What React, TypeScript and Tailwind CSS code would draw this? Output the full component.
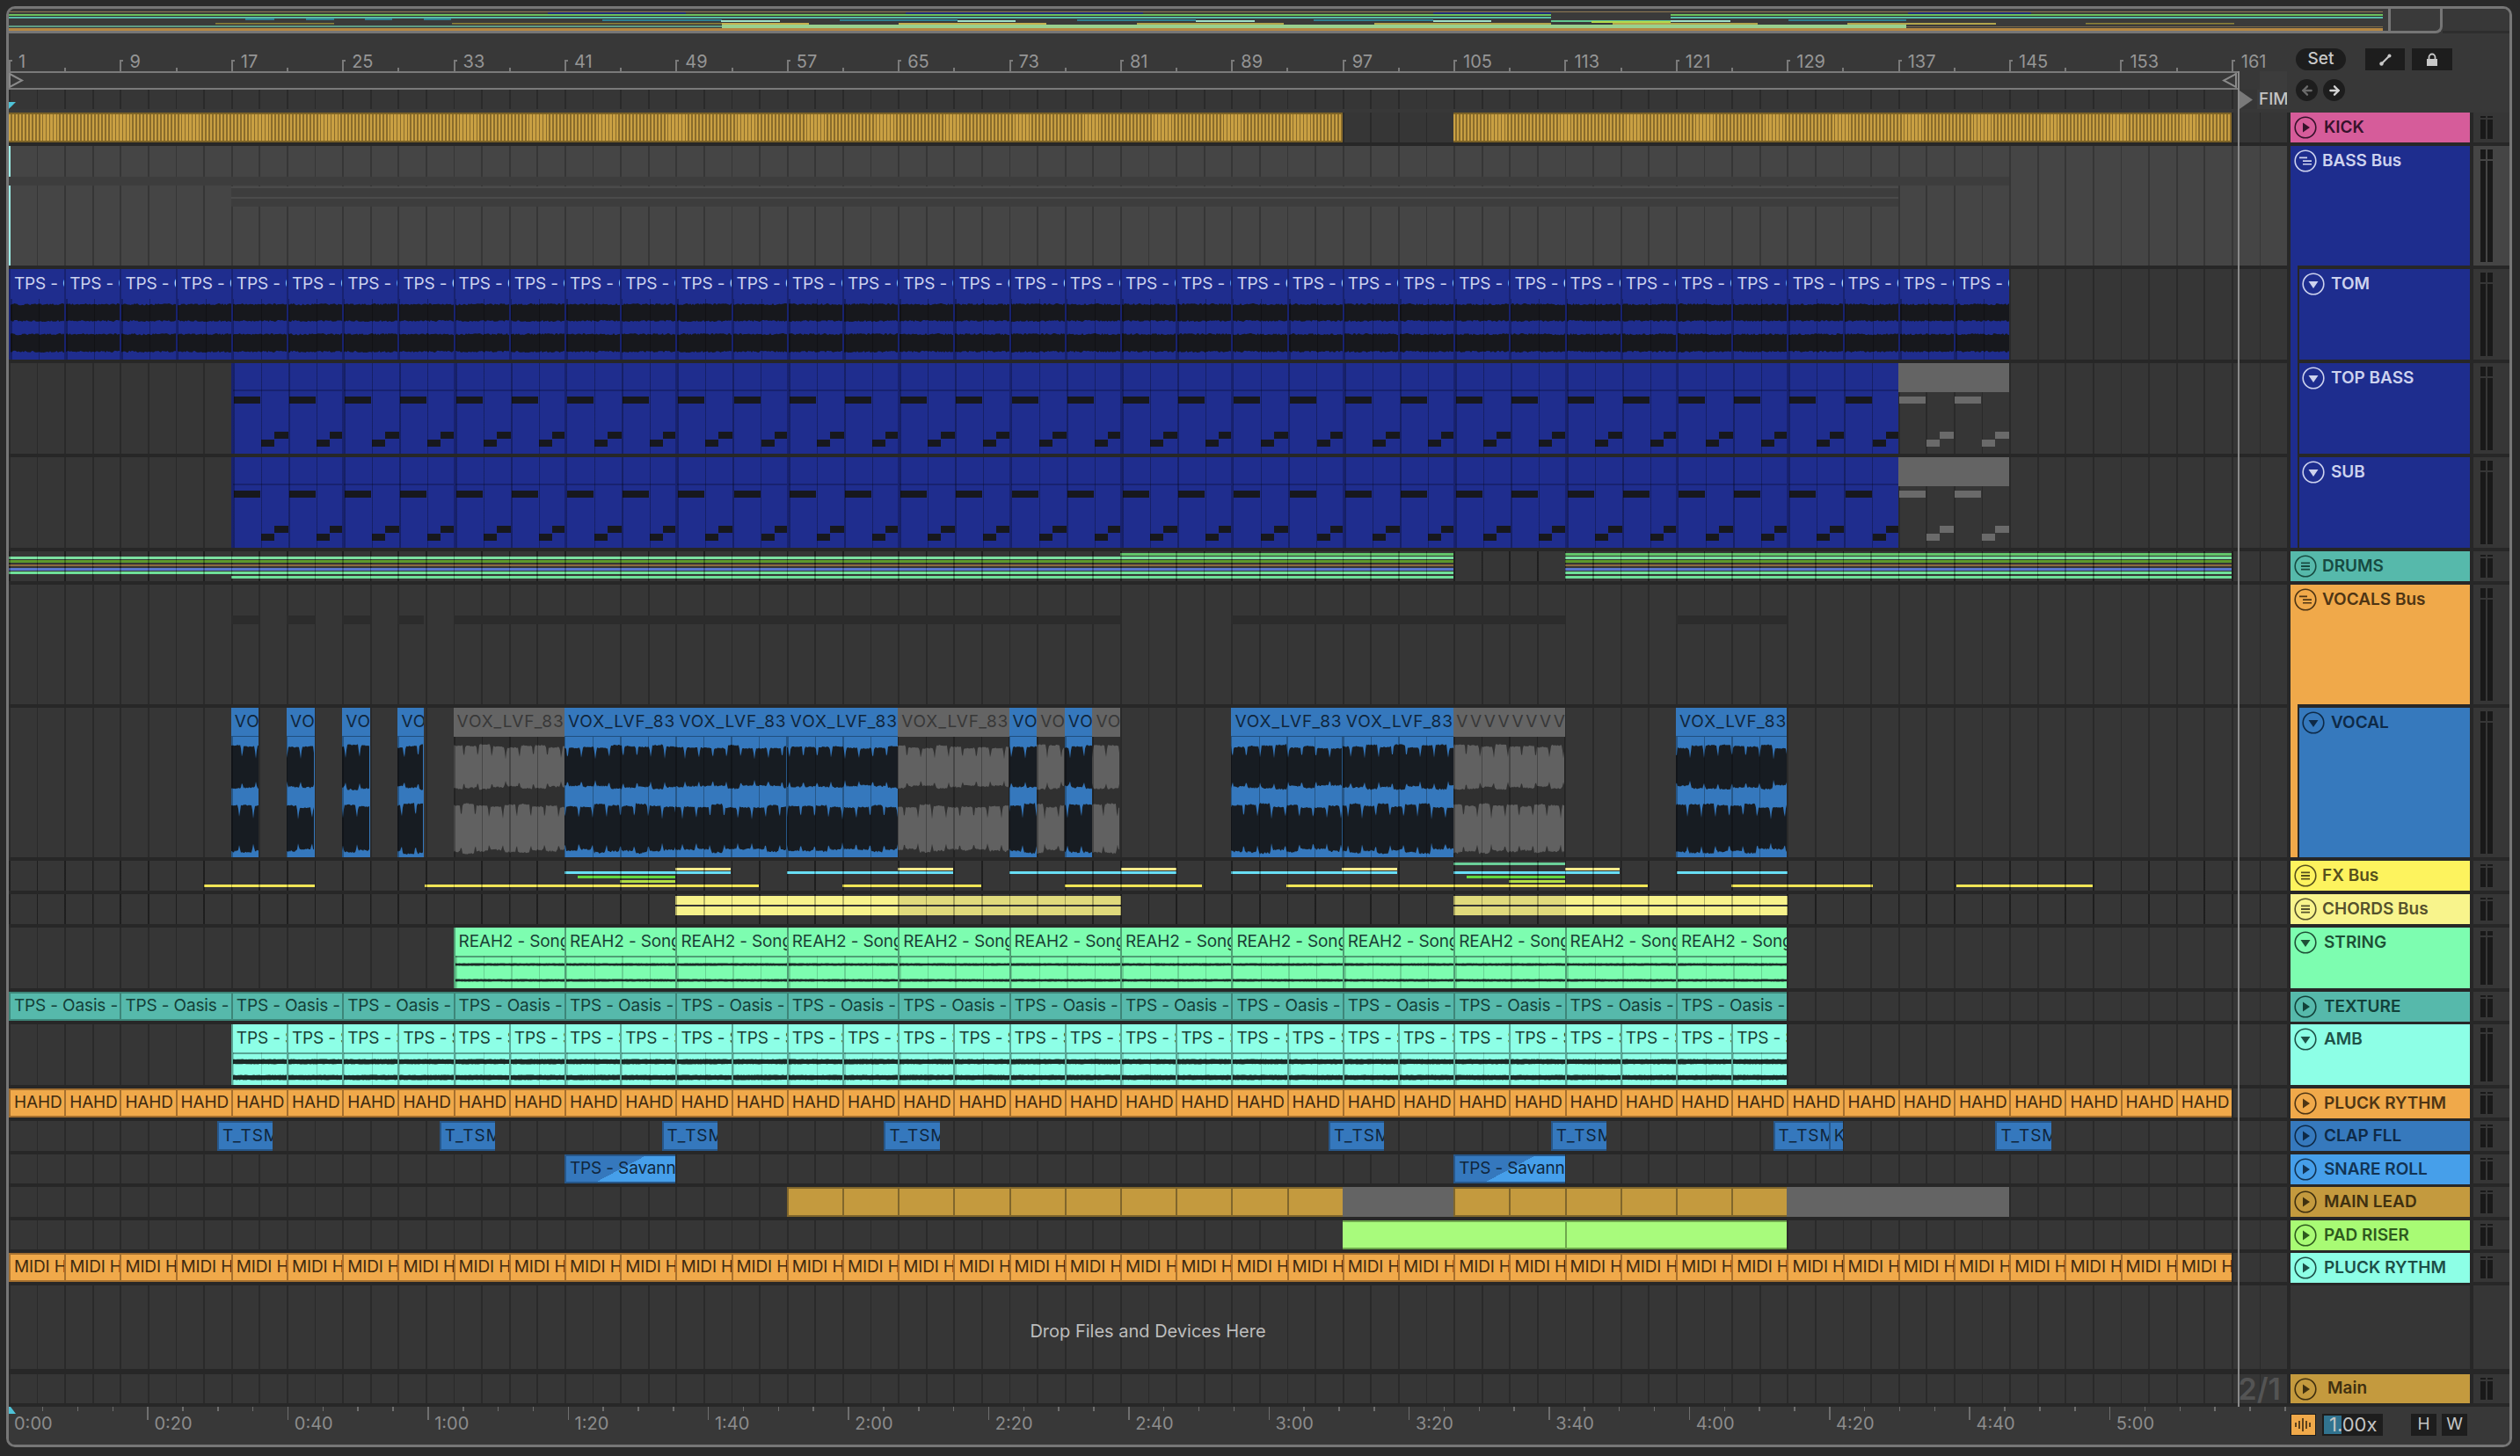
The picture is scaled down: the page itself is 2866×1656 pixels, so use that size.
import React from "react";
import { ArrowLeft, ArrowRight } from "lucide-react";

const BAR = 15.8;
const bx = (bar: number) => (bar - 1) * BAR;
const seq = (from: number, to: number, step: number) => {
  const out: number[] = [];
  for (let b = from; b < to; b += step) out.push(b);
  return out;
};
const rnd = (i: number) => {
  const v = Math.sin(i * 12.9898) * 43758.5453;
  return v - Math.floor(v);
};

const gridLane =
  "bg-[repeating-linear-gradient(90deg,#2a2a2a_0,#2a2a2a_1.8px,transparent_1.8px,transparent_31.6px)]";
const gridLaneLight =
  "bg-[repeating-linear-gradient(90deg,#363636_0,#363636_1.8px,transparent_1.8px,transparent_31.6px)]";
const gridClip =
  "bg-[repeating-linear-gradient(90deg,rgba(0,0,0,0.28)_0,rgba(0,0,0,0.28)_1.5px,transparent_1.5px,transparent_31.6px)]";

// flat-ish band, for the sustained samples
function band(w: number, seed: number, cy: number, up: number, down: number) {
  const top: string[] = [];
  const bottom: string[] = [];
  for (let x = 0; x <= w; x += 1.5) {
    top.push(`${x} ${(cy - up * (1 - rnd(x + seed) * 0.2)).toFixed(1)}`);
    bottom.unshift(`${x} ${(cy + down * (1 - rnd(x * 2 + seed) * 0.2)).toFixed(1)}`);
  }
  return `M${top.join("L")}L${bottom.join("L")}Z`;
}

// vocal envelope: broad lobes with narrow cuts between them
function lobes(w: number, seed: number, cy: number, up: number, down: number) {
  const top: string[] = [];
  const bottom: string[] = [];
  const period = 15.8;
  for (let x = 0; x <= w; x += 1) {
    const phase = ((x + seed * 3) / period) * Math.PI;
    const s = Math.min(1, Math.abs(Math.sin(phase)) * 3.2);
    const lobe = Math.floor((x + seed * 3) / period);
    const gain = 0.82 + 0.18 * rnd(lobe + seed);
    const a = up * gain * (0.4 + 0.6 * s) * (1 - rnd(x + seed) * 0.06);
    const b = down * gain * (0.72 + 0.28 * s) * (1 - rnd(x * 3 + seed) * 0.08);
    top.push(`${x} ${(cy - a).toFixed(1)}`);
    bottom.unshift(`${x} ${(cy + b).toFixed(1)}`);
  }
  return `M${top.join("L")}L${bottom.join("L")}Z`;
}

function VoxWave({ w, seed, color }: { w: number; seed: number; color: string }) {
  return (
    <svg className="absolute left-0 bottom-0" width={w} height={137} fill={color}>
      <path d={lobes(w, seed, 34, 26, 27)} />
      <path d={lobes(w, seed + 1, 103, 28, 31)} />
    </svg>
  );
}

function TomWave({ w, seed }: { w: number; seed: number }) {
  return (
    <svg className="absolute left-0 bottom-0" width={w} height={69} fill="#17181d">
      <path d={band(w, seed, 16, 11, 10)} />
      <path d={band(w, seed + 3, 50, 11, 11)} />
    </svg>
  );
}

function Clip({ from, to, className, children }: { from: number; to: number; className?: string; children?: React.ReactNode }) {
  return (
    <div
      className={`absolute top-0 bottom-0 overflow-hidden ${className ?? ""}`}
      style={{ left: bx(from), width: (to - from) * BAR }}
    >
      {children}
    </div>
  );
}

function Seg({ from, to, top, h, className }: { from: number; to: number; top: number; h: number; className: string }) {
  return <div className={`absolute ${className}`} style={{ left: bx(from), width: (to - from) * BAR, top, height: h }} />;
}

// x in screen pixels, for the strips read straight off the picture
function Line({ x0, x1, top, h, className }: { x0: number; x1: number; top: number; h: number; className: string }) {
  return <div className={`absolute ${className}`} style={{ left: x0 - 10, width: x1 - x0, top, height: h }} />;
}

function Title({ text, h = "h-[34px]", wide }: { text: string; h?: string; wide?: boolean }) {
  return (
    <div className={`${h} flex items-center pl-[4px] whitespace-nowrap text-[19px] ${wide ? "tracking-[0.9px]" : "tracking-[-0.15px]"}`}>
      {text}
    </div>
  );
}

function TextClips({ from, to, step, text, className }: { from: number; to: number; step: number; text: string; className: string }) {
  return (
    <>
      {seq(from, to, step).map((b) => (
        <Clip key={b} from={b} to={b + step} className={className}>
          <Title text={text} h="h-full" />
        </Clip>
      ))}
    </>
  );
}

function BassNotes({ from, to, note, gridded }: { from: number; to: number; note: string; gridded?: boolean }) {
  return (
    <>
      {seq(from, to, 4).map((b) => {
        const l = bx(b) - bx(from);
        return (
          <React.Fragment key={b}>
            <div className={`absolute h-[8px] top-[38px] ${note}`} style={{ left: l + 1, width: 30 }} />
            <div className={`absolute h-[8px] top-[87px] ${note}`} style={{ left: l + 32, width: 15 }} />
            <div className={`absolute h-[8px] top-[78px] ${note}`} style={{ left: l + 47, width: 16 }} />
          </React.Fragment>
        );
      })}
      {gridded && <div className={`absolute inset-0 ${gridClip}`} />}
    </>
  );
}

function BassLane() {
  return (
    <>
      {seq(17, 137, 8).map((b) => (
        <Clip key={b} from={b} to={b + 8} className="bg-[#1f2d8e] border-l-2 border-[#182270]">
          <div className="h-[32px] border-b-2 border-[#182270]" />
          <BassNotes from={b} to={b + 8} note="bg-[#17181d]" gridded />
        </Clip>
      ))}
      <Clip from={137} to={145}>
        <div className="h-[33px] bg-[#646464]" />
        <BassNotes from={137} to={145} note="bg-[#6a6a6a]" />
      </Clip>
    </>
  );
}

type VoxDef = { from: number; to: number; gray?: boolean; label: string };
const voxClips: VoxDef[] = [
  { from: 17, to: 19, label: "VO" },
  { from: 21, to: 23, label: "VO" },
  { from: 25, to: 27, label: "VO" },
  { from: 29, to: 30.85, label: "VO" },
  { from: 33, to: 41, gray: true, label: "VOX_LVF_83" },
  { from: 41, to: 49, label: "VOX_LVF_83" },
  { from: 49, to: 57, label: "VOX_LVF_83" },
  { from: 57, to: 65, label: "VOX_LVF_83" },
  { from: 65, to: 73, gray: true, label: "VOX_LVF_83" },
  { from: 73, to: 75, label: "VO" },
  { from: 75, to: 77, gray: true, label: "VO" },
  { from: 77, to: 79, label: "VO" },
  { from: 79, to: 81, gray: true, label: "VO" },
  { from: 89, to: 97, label: "VOX_LVF_83" },
  { from: 97, to: 105, label: "VOX_LVF_83" },
  { from: 121, to: 129, label: "VOX_LVF_83" },
];

function VocalLane() {
  return (
    <>
      {voxClips.map((c) => {
        const w = (c.to - c.from) * BAR;
        return (
          <Clip key={c.from} from={c.from} to={c.to} className={c.gray ? "bg-[#303030]" : "bg-[#3578bd]"}>
            <div className={`h-[33px] ${c.gray ? "bg-[#646464] text-[#383838]" : "text-[#10263c] border-b border-[#1f4f80]"}`}>
              <Title text={c.label} h="h-[33px]" wide />
            </div>
            <VoxWave w={w} seed={c.from} color={c.gray ? "#616161" : "#171c22"} />
            <div className={`absolute left-0 right-0 top-[33px] bottom-0 ${gridClip}`} />
          </Clip>
        );
      })}
      <Clip from={105} to={113} className="bg-[#303030]">
        <div className="h-[33px] bg-[#646464] text-[#383838] flex text-[19px] items-center overflow-hidden">
          {seq(0, 8, 1).map((i) => (
            <span key={i} className="w-[15.8px] shrink-0 pl-[3px]">V</span>
          ))}
        </div>
        <VoxWave w={126} seed={11} color="#616161" />
        <div className={`absolute left-0 right-0 top-[33px] bottom-0 ${gridClip}`} />
      </Clip>
    </>
  );
}

function SampleClips({ from, to, step, text, color, line, barH, top, gap }: { from: number; to: number; step: number; text: string; color: string; line: string; barH: number; top: number; gap: number }) {
  const w = step * BAR;
  return (
    <>
      {seq(from, to, step).map((b) => (
        <Clip key={b} from={b} to={b + step} className={`${color} ${line} border-l-2 text-[#1a3f36]`}>
          <Title text={text} h="h-[32px]" />
          <div className={`h-[2px] ${line} border-b-2`} />
          <svg className="absolute left-0" style={{ top }} width={w} height={gap + barH + 2} fill="#1b2a27">
            <path d={band(w, b, barH / 2 + 1, barH / 2 + 0.5, barH / 2 + 0.5)} />
            <path d={band(w, b + 2, gap + barH / 2 + 1, barH / 2 + 0.5, barH / 2 + 0.5)} />
          </svg>
          <div className={`absolute left-0 right-0 top-[32px] bottom-0 ${gridClip} opacity-60`} />
        </Clip>
      ))}
    </>
  );
}

type IconKind = "play" | "down" | "list" | "bus";
function TrackIcon({ kind }: { kind: IconKind }) {
  return (
    <svg width="26" height="26" viewBox="0 0 26 26" className="shrink-0" fill="currentColor" stroke="none">
      <circle cx="13" cy="13" r="11.8" fill="none" stroke="currentColor" strokeWidth="1.6" />
      {kind === "play" && <path d="M10 7.5 L18 13 L10 18.5 Z" />}
      {kind === "down" && <path d="M7.5 10 H18.5 L13 18 Z" />}
      {kind === "list" && <path d="M8 8.5 H18 V10.3 H8 Z M8 12.1 H18 V13.9 H8 Z M8 15.7 H18 V17.5 H8 Z" />}
      {kind === "bus" && <path d="M6 8.5 H15 V10.2 H6 Z M10 12.2 H20 V13.9 H10 Z M10 15.9 H20 V17.6 H10 Z" />}
    </svg>
  );
}

type Track = {
  name: string;
  h: number;
  bg: string;
  fg: string;
  icon: IconKind;
  textMl: string;
  parent?: string;
  gapStripe?: string;
  laneBg?: string;
  overlay?: boolean;
  lane?: React.ReactNode;
};

const orangeClip = "bg-[#f0a94a] border-y-2 border-l-2 border-[#a5702f] text-[#3f2a10]";

const tracks: Track[] = [
  {
    name: "KICK", h: 38, bg: "bg-[#d65c9a]", fg: "text-[#36122b]", icon: "play", textMl: "ml-[8px]",
    lane: (
      <>
        {[[1, 97], [105, 161]].map(([a, b]) => (
          <Clip key={a} from={a} to={b} className="border-y-2 border-[#7c6327] bg-[repeating-linear-gradient(90deg,#c9a043_0,#c9a043_2.2px,#8a6c2b_2.2px,#8a6c2b_3.95px)]" />
        ))}
      </>
    ),
  },
  {
    name: "BASS Bus", h: 140, bg: "bg-[#1e2d8e]", fg: "text-[#cdd2ee]", icon: "bus", textMl: "ml-[6px]", gapStripe: "bg-[#1e2d8e]", laneBg: "bg-[#454545]",
    lane: (
      <>
        <div className="absolute left-0 top-0 bottom-0 w-[2px] bg-[#9ef0ea]" />
        <Seg from={1} to={145} top={35} h={10} className="bg-[#3d3d3d]" />
        <Seg from={17} to={137} top={46} h={23} className="bg-[#3d3d3d]" />
        <Seg from={17} to={137} top={46} h={1.5} className="bg-[#4a4a4a]" />
        <Seg from={17} to={137} top={58} h={1.5} className="bg-[#4a4a4a]" />
      </>
    ),
  },
  {
    name: "TOM", h: 107, bg: "bg-[#1e2d8e]", fg: "text-[#cdd2ee]", icon: "down", textMl: "ml-[7px]", parent: "bg-[#1e2d8e]", gapStripe: "bg-[#1e2d8e]",
    lane: (
      <>
        {seq(1, 145, 4).map((b) => (
          <Clip key={b} from={b} to={b + 4} className="bg-[#1f2d8e] border-l-2 border-[#182270] text-[#ccd2ee]">
            <Title text="TPS - O" />
            <TomWave w={63} seed={b} />
            <div className={`absolute left-0 right-0 top-[34px] bottom-0 ${gridClip}`} />
          </Clip>
        ))}
      </>
    ),
  },
  { name: "TOP BASS", h: 107, bg: "bg-[#1e2d8e]", fg: "text-[#cdd2ee]", icon: "down", textMl: "ml-[7px]", parent: "bg-[#1e2d8e]", gapStripe: "bg-[#1e2d8e]", lane: <BassLane /> },
  { name: "SUB", h: 107, bg: "bg-[#1e2d8e]", fg: "text-[#cdd2ee]", icon: "down", textMl: "ml-[7px]", parent: "bg-[#1e2d8e]", lane: <BassLane /> },
  {
    name: "DRUMS", h: 38, bg: "bg-[#56b9ab]", fg: "text-[#174a41]", icon: "list", textMl: "ml-[6px]", overlay: true,
    lane: (
      <>
        {[[1, 105], [113, 161]].map(([a, b]) => (
          <React.Fragment key={a}>
            <Seg from={a} to={b} top={6} h={3} className="bg-[#7be0a0]" />
            <Seg from={a} to={b} top={10} h={3} className="bg-[#5c9a2c]" />
            <Seg from={a} to={b} top={15} h={2} className="bg-[#8a6a3e]" />
            <Seg from={a} to={b} top={19} h={3} className="bg-[#5a78d0]" />
            <Seg from={a} to={b} top={23} h={2.5} className="bg-[#6fe09a]" />
            <Seg from={Math.max(a, 17)} to={b} top={28} h={2.5} className="bg-[#6fe09a]" />
          </React.Fragment>
        ))}
        <Seg from={81} to={105} top={2} h={3} className="bg-[#62c66a]" />
        <Seg from={113} to={161} top={2} h={3} className="bg-[#62c66a]" />
      </>
    ),
  },
  {
    name: "VOCALS Bus", h: 140, bg: "bg-[#f0a94a]", fg: "text-[#4e3514]", icon: "bus", textMl: "ml-[6px]", gapStripe: "bg-[#f0a94a]",
    lane: (
      <>
        {voxClips.map((c) => (
          <Seg key={c.from} from={c.from} to={c.to} top={35} h={10} className="bg-[#2c2c2c]" />
        ))}
        <Seg from={105} to={113} top={35} h={10} className="bg-[#2c2c2c]" />
      </>
    ),
  },
  { name: "VOCAL", h: 174, bg: "bg-[#3679bd]", fg: "text-[#0e2a47]", icon: "down", textMl: "ml-[7px]", parent: "bg-[#f0a94a]", lane: <VocalLane /> },
  {
    name: "FX Bus", h: 38, bg: "bg-[#fdf35e]", fg: "text-[#56501c]", icon: "list", textMl: "ml-[6px]", overlay: true,
    lane: (
      <>
        <Line x0={1653} x1={1780} top={2} h={3} className="bg-[#6bd09a]" />
        {[[768, 831], [1021, 1084], [1275, 1338], [1526, 1589], [1780, 1842]].map(([a, b]) => (
          <Line key={a} x0={a} x1={b} top={8} h={3} className="bg-[#f3ea8c]" />
        ))}
        {[[642, 831], [895, 1084], [1148, 1338], [1400, 1589], [1653, 1842], [1907, 2033]].map(([a, b]) => (
          <Line key={a} x0={a} x1={b} top={12} h={3} className="bg-[#68def5]" />
        ))}
        <Line x0={657} x1={768} top={17} h={3} className="bg-[#62d83e]" />
        <Line x0={1668} x1={1780} top={17} h={3} className="bg-[#62d83e]" />
        <Line x0={705} x1={768} top={22} h={3} className="bg-[#b0dc44]" />
        <Line x0={1716} x1={1780} top={22} h={3} className="bg-[#b0dc44]" />
        {[[232, 358], [483, 863], [958, 1116], [1211, 1367], [1463, 1874], [1969, 2130], [2225, 2380]].map(([a, b]) => (
          <Line key={a} x0={a} x1={b} top={27} h={3} className="bg-[#f2e657]" />
        ))}
      </>
    ),
  },
  {
    name: "CHORDS Bus", h: 38, bg: "bg-[#f8f48c]", fg: "text-[#55522c]", icon: "list", textMl: "ml-[6px]", overlay: true,
    lane: (
      <>
        {[2, 14].map((top) => (
          <React.Fragment key={top}>
            <Line x0={768} x1={1021} top={top} h={10} className="bg-[#f7f28b]" />
            <Line x0={1021} x1={1275} top={top} h={10} className="bg-[#e0da7c]" />
            <Line x0={1653} x1={1780} top={top} h={10} className="bg-[#e0da7c]" />
            <Line x0={1780} x1={2033} top={top} h={10} className="bg-[#f7f28b]" />
          </React.Fragment>
        ))}
      </>
    ),
  },
  {
    name: "STRING", h: 73, bg: "bg-[#7dfdb0]", fg: "text-[#1e5036]", icon: "down", textMl: "ml-[8px]",
    lane: <SampleClips from={33} to={129} step={8} text="REAH2 - Song" color="bg-[#7dfdb0]" line="border-[#4f9f74]" barH={2} top={40} gap={18} />,
  },
  {
    name: "TEXTURE", h: 37, bg: "bg-[#56b9ab]", fg: "text-[#12423a]", icon: "play", textMl: "ml-[8px]",
    lane: <TextClips from={1} to={129} step={8} text="TPS - Oasis -" className="bg-[#56b9ab] border-y-2 border-l-2 border-[#3d8679] text-[#133f38]" />,
  },
  {
    name: "AMB", h: 73, bg: "bg-[#8dffe6]", fg: "text-[#1e5248]", icon: "down", textMl: "ml-[8px]",
    lane: <SampleClips from={17} to={129} step={4} text="TPS - S" color="bg-[#8dffe6]" line="border-[#58a594]" barH={5} top={39} gap={18} />,
  },
  {
    name: "PLUCK RYTHM", h: 37, bg: "bg-[#f0a94a]", fg: "text-[#4e3514]", icon: "play", textMl: "ml-[8px]",
    lane: <TextClips from={1} to={161} step={4} text="HAHD" className={orangeClip} />,
  },
  {
    name: "CLAP FLL", h: 38, bg: "bg-[#3679bd]", fg: "text-[#0e2a47]", icon: "play", textMl: "ml-[8px]",
    lane: (
      <>
        {[16, 32, 48, 64, 96, 112, 128, 144].map((b) => (
          <Clip key={b} from={b} to={b + 4} className="bg-[#3578bd] border-2 border-r-0 border-[#27578a] text-[#10263c]">
            <Title text="T_TSM" h="h-full" wide />
          </Clip>
        ))}
        <Clip from={132} to={133} className="bg-[#3578bd] border-y-2 border-l-2 border-[#27578a] text-[#10263c]">
          <Title text="K" h="h-full" />
        </Clip>
      </>
    ),
  },
  {
    name: "SNARE ROLL", h: 37, bg: "bg-[#469fea]", fg: "text-[#123454]", icon: "play", textMl: "ml-[8px]",
    lane: (
      <>
        {[41, 105].map((b) => (
          <Clip key={b} from={b} to={b + 8} className="border-2 border-r-0 border-[#27578a] text-[#10263c] bg-[linear-gradient(152deg,#3578bd_50%,#469fea_50%)]">
            <Title text="TPS - Savann" h="h-full" />
          </Clip>
        ))}
      </>
    ),
  },
  {
    name: "MAIN LEAD", h: 38, bg: "bg-[#c49a3e]", fg: "text-[#3f3010]", icon: "play", textMl: "ml-[8px]",
    lane: (
      <>
        {[...seq(57, 97, 4), ...seq(105, 129, 4)].map((b) => (
          <Clip key={b} from={b} to={b + 4} className="bg-[#c49a3e] border-y-2 border-l-2 border-[#80662c]" />
        ))}
        <Clip from={97} to={105} className="bg-[#646464]" />
        <Clip from={129} to={145} className="bg-[#646464]" />
      </>
    ),
  },
  {
    name: "PAD RISER", h: 37, bg: "bg-[#a8fb74]", fg: "text-[#2e5a1e]", icon: "play", textMl: "ml-[8px]",
    lane: (
      <>
        <Clip from={97} to={113} className="bg-[#a8fb7c] border-y-2 border-[#6fa84d]" />
        <Clip from={113} to={129} className="bg-[#a8fb7c] border-y-2 border-l-2 border-[#6fa84d]" />
      </>
    ),
  },
  {
    name: "PLUCK RYTHM", h: 37, bg: "bg-[#8dffe6]", fg: "text-[#1d4f47]", icon: "play", textMl: "ml-[8px]",
    lane: <TextClips from={1} to={161} step={4} text="MIDI H" className={orangeClip} />,
  },
];

function Meter({ h, laneBg }: { h: number; laneBg?: string }) {
  const topH = h > 100 ? 11 : h > 60 ? 5 : 1.5;
  return (
    <div className="w-[41px] ml-[4px] flex flex-col">
      <div className={`flex-1 flex gap-[2px] pl-[8px] pt-[4px] pb-[4px] ${laneBg ?? "bg-[#363636]"}`}>
        {[0, 1].map((i) => (
          <div key={i} className="w-[6px] flex flex-col gap-[2px]">
            <div className="bg-[#191919]" style={{ height: topH }} />
            <div className="flex-1 bg-[#191919]" />
          </div>
        ))}
      </div>
      <div className="h-[4px]" />
    </div>
  );
}

function Row({ t }: { t: Track }) {
  return (
    <div className="flex bg-[#272727]" style={{ height: t.h }}>
      <div className="w-[2591px] flex flex-col">
        <div className={`relative flex-1 overflow-hidden ${t.laneBg ?? "bg-[#363636]"} ${t.laneBg ? gridLaneLight : gridLane}`}>
          {t.lane}
          {t.overlay && <div className={`absolute inset-0 ${gridClip}`} />}
        </div>
        <div className="h-[4px]" />
      </div>
      <div className="w-[204px] ml-[4px] flex flex-col">
        <div className="flex-1 flex">
          {t.parent && <div className={`w-[8px] ${t.parent}`} />}
          {t.parent && <div className="w-[2px]" />}
          <div className={`flex-1 ${t.bg} ${t.fg} font-semibold text-[19px]`}>
            <div className={`h-[34px] flex items-center ${t.parent ? "pl-[3px]" : "pl-[4px]"}`}>
              <TrackIcon kind={t.icon} />
              <span className={`${t.textMl} whitespace-nowrap`}>{t.name}</span>
            </div>
          </div>
        </div>
        <div className="h-[4px]">
          {t.gapStripe && <div className={`w-[8px] h-full ${t.gapStripe}`} />}
        </div>
      </div>
      <Meter h={t.h} laneBg={t.laneBg} />
    </div>
  );
}

// overview strip, drawn straight off the picture: [x0, x1, y, h, colour]
const overviewBars: [number, number, number, number, string][] = [
  [0, 2700, 3, 1, "#8f7a55"],
  [613, 770, 4, 2, "#1d2a7a"], [1020, 1290, 4, 2, "#1d2a7a"], [1620, 1754, 4, 2, "#1d2a7a"], [2160, 2300, 4, 2, "#1d2a7a"],
  [0, 1754, 6, 2, "#6cc25c"], [1890, 2700, 6, 2, "#6cc25c"],
  [0, 1754, 8, 1, "#2c2c2c"], [1890, 2700, 8, 1, "#2c2c2c"],
  [0, 1754, 9, 2, "#57bba8"], [1890, 2700, 9, 2, "#57bba8"],
  [269, 302, 11, 2, "#2f7f90"], [338, 370, 11, 2, "#2f7f90"], [405, 436, 11, 2, "#2f7f90"], [472, 503, 11, 2, "#2f7f90"],
  [675, 811, 12, 2, "#2f7f90"], [945, 1079, 12, 2, "#2f7f90"], [1215, 1350, 12, 2, "#2f7f90"], [1484, 1620, 12, 2, "#2f7f90"], [2024, 2158, 12, 2, "#2f7f90"],
  [810, 877, 13, 2, "#9fe0c8"], [1079, 1145, 13, 2, "#9fe0c8"], [1350, 1417, 13, 2, "#9fe0c8"], [1620, 1686, 13, 2, "#9fe0c8"], [1890, 1958, 13, 2, "#9fe0c8"],
  [1754, 1890, 13, 2, "#62c78f"], [1800, 1890, 14, 2, "#b3d84a"],
  [235, 370, 16, 1.5, "#8f8438"], [504, 811, 16, 1.5, "#8f8438"], [811, 910, 16, 2, "#c6b04f"], [1012, 1180, 16, 2, "#c6b04f"],
  [1283, 1450, 16, 2, "#b3a54c"], [1553, 1754, 16, 2, "#b3a54c"], [1824, 1989, 16, 2, "#b3a54c"], [2091, 2260, 16, 2, "#b3a54c"], [2362, 2531, 16, 1.5, "#8f8438"],
  [0, 811, 19, 2, "#5f9c84"], [811, 2158, 18, 4, "#99d08e"], [2158, 2700, 20, 1, "#7c6a4a"],
  [0, 2700, 22, 3, "#b58743"],
];

function Overview() {
  return (
    <div className="h-[28px] flex">
      <div className="w-[2768px] bg-[#3a3a3a] border-b-[3px] border-r-[3px] border-[#767676] rounded-br-[8px]">
        <svg width="2720" height="25">
          {overviewBars.map(([a, b, y, h, c], i) => (
            <rect key={i} x={a} y={y} width={b - a} height={h} fill={c} />
          ))}
          <rect x="2706" y="0" width="3" height="25" fill="#767676" />
        </svg>
      </div>
      <div className="flex-1 bg-[#383838] border-b-[3px] border-[#2e2e2e]" />
    </div>
  );
}

const barLabels = seq(1, 162, 8);

function TopSection() {
  return (
    <div className="h-[90px] flex bg-[#383838]">
      <div className="w-[2591px] flex flex-col">
        {/* bar ruler: one cell per 8 bars */}
        <div className="h-[43px] flex overflow-hidden text-[#959595] text-[20px] leading-[20px]">
          {barLabels.map((b) => (
            <div key={b} className="w-[126.4px] shrink-0 flex">
              <div className="w-[63.2px] flex">
                <div className="self-end shrink-0 w-[4px] h-[13px] border-l-2 border-t-2 border-[#7a7a7a]" />
                <span className="ml-[7px] mt-[22px]">{b}</span>
              </div>
              <div className="self-end w-[2px] h-[4px] bg-[#7a7a7a]" />
            </div>
          ))}
        </div>
        <div className="h-[21px] flex">
          <div className="w-[2537px] flex justify-between border-y-2 border-r-2 border-[#7a7a7a]">
            <svg width="18" height="17" fill="none" stroke="#8a8a8a" strokeWidth="2">
              <path d="M1 1 L15 8.5 L1 16 Z" />
            </svg>
            <svg width="18" height="17" fill="none" stroke="#8a8a8a" strokeWidth="2">
              <path d="M16 1 L2 8.5 L16 16 Z" />
            </svg>
          </div>
          <div className="ml-[23px] flex-1 bg-[#3c3c3c]" />
        </div>
        <div className={`h-[22px] flex bg-[#363636] ${gridLane}`}>
          <svg className="self-end" width="8" height="8" fill="#4ec3d8">
            <path d="M0 0 H8 L0 8 Z" />
          </svg>
          <svg className="ml-[2529px] mt-[1px]" width="16" height="21" fill="#7a7a7a">
            <path d="M0 0 L15 10.5 L0 21 Z" />
          </svg>
          <div className="ml-[4px] flex-1 bg-[#3c3c3c] pl-[2px] flex items-center overflow-hidden text-[#c4c4c4] text-[19px] font-medium whitespace-nowrap">FIM</div>
        </div>
      </div>
      <div className="ml-[4px] pt-[17px] pl-[6px] flex flex-col">
        <div className="flex">
          <div className="w-[57px] h-[25px] rounded-full bg-[#1d1d1d] flex items-center justify-center text-[#c8c8c8] text-[19px] font-medium">Set</div>
          <div className="ml-[22px] w-[45px] h-[25px] bg-[#1d1d1d] flex items-center justify-center">
            <svg width="16" height="16" fill="#c8c8c8" stroke="#c8c8c8" strokeWidth="2.2">
              <path d="M4 12 L12 4" />
              <circle cx="3.5" cy="12.5" r="2.2" stroke="none" />
              <circle cx="12.5" cy="3.5" r="2" stroke="none" />
            </svg>
          </div>
          <div className="ml-[8px] w-[46px] h-[25px] bg-[#1d1d1d] flex items-center justify-center">
            <svg width="16" height="16" fill="#c8c8c8">
              <path d="M2 7 H14 V15 H2 Z" />
              <path d="M4.5 7 V5 a3.5 3.5 0 0 1 7 0 V7" fill="none" stroke="#c8c8c8" strokeWidth="1.8" />
            </svg>
          </div>
        </div>
        <div className="mt-[10px] flex gap-[6px]">
          <div className="w-[25px] h-[25px] rounded-full bg-[#1d1d1d] flex items-center justify-center text-[#6a6a6a]">
            <ArrowLeft size={16} strokeWidth={3.5} />
          </div>
          <div className="w-[25px] h-[25px] rounded-full bg-[#1d1d1d] flex items-center justify-center text-[#d4d4d4]">
            <ArrowRight size={16} strokeWidth={3.5} />
          </div>
        </div>
      </div>
    </div>
  );
}

const timeLabels = ["0:00", "0:20", "0:40", "1:00", "1:20", "1:40", "2:00", "2:20", "2:40", "3:00", "3:20", "3:40", "4:00", "4:20", "4:40", "5:00"];

function TimeRuler() {
  return (
    <div className="flex-1 flex bg-[#383838]">
      {/* time ruler: one cell per 20 seconds, ticks every 5 */}
      <div className="relative w-[2591px] pl-[1px] flex overflow-hidden text-[#8c8c8c] text-[20px] leading-[20px]">
        <svg className="absolute left-0 top-0" width="8" height="8" fill="#4ec3d8">
          <path d="M0 0 H2 L8 8 H0 Z" />
        </svg>
        {[...timeLabels, ""].map((l, i) => (
          <div key={i} className={`w-[159.4px] shrink-0 flex ${i === 0 ? "-ml-[3px]" : ""}`}>
            <div className="w-[39.85px] shrink-0 flex">
              <div className={`shrink-0 w-[1.5px] bg-[#6e6e6e] ${l ? "h-[15px]" : "h-[5px]"}`} />
              {l && <span className="ml-[6.5px] mt-[9px]">{l}</span>}
            </div>
            {[0, 1, 2].map((k) => (
              <div key={k} className="w-[39.85px] shrink-0">
                <div className="w-[1.5px] h-[5px] bg-[#6e6e6e]" />
              </div>
            ))}
          </div>
        ))}
      </div>
      <div className="ml-[4px] pt-[8px] flex items-start text-[#c4c4c4]">
        <div className="w-[29px] h-[25px] bg-[#f0a94a] flex items-center justify-center border border-[#1d1d1d]">
          <svg width="21" height="15" stroke="#3b2a12" strokeWidth="1.6">
            <path d="M2 5 V10 M6 3 V12 M10 0 V15 M14 3 V12 M18 5 V10" />
          </svg>
        </div>
        <div className="relative ml-[7px] w-[69px] h-[25px] bg-[#1d1d1d] border-2 border-[#1d1d1d] text-[22px] leading-[21px] pl-[6px]">
          <div className="absolute left-0 top-0 bottom-0 w-[20px] bg-[#31738f]" />
          <span className="relative">1.00x</span>
        </div>
        <div className="ml-[32px] w-[29px] h-[25px] bg-[#1d1d1d] flex items-center justify-center text-[19px]">H</div>
        <div className="ml-[6px] w-[29px] h-[25px] bg-[#1d1d1d] flex items-center justify-center text-[19px]">W</div>
      </div>
    </div>
  );
}

export default function App() {
  return (
    <div className="w-[2866px] h-[1656px] bg-[#2a2a2a] pt-[7px] pl-[7px] overflow-hidden font-['Inter',sans-serif]">
      <div className="w-[2850px] h-[1639px] border-[3px] border-[#767676] rounded-[10px] overflow-hidden flex flex-col bg-[#383838]">
        <Overview />
        <div className="relative flex-1 flex flex-col">
          <TopSection />
          {tracks.map((t, i) => (
            <Row key={i} t={t} />
          ))}
          {/* drop zone */}
          <div className="h-[101px] flex bg-[#272727]">
            <div className={`w-[2591px] mb-[6px] pt-[8px] bg-[#363636] ${gridLane} flex items-center justify-center text-[20px] text-[#bdbdbd]`}>
              Drop Files and Devices Here
            </div>
            <div className="w-[204px] ml-[4px] mb-[6px] bg-[#363636]" />
            <div className="w-[41px] ml-[4px] mb-[6px] bg-[#363636]" />
          </div>
          <div className="h-[37px] flex bg-[#272727]">
            <div className="w-[2591px] pb-[4px]">
              <div className={`h-full bg-[#363636] ${gridLane} flex justify-end pr-[7px] text-[34px] font-semibold text-[#545454] leading-[33px]`}>
                2/1
              </div>
            </div>
            <div className="w-[204px] ml-[4px] flex flex-col">
              <div className="flex-1 bg-[#c49a3e] text-[#3f3010] font-semibold text-[19px] flex items-center pl-[4px]">
                <TrackIcon kind="play" />
                <span className="ml-[12px]">Main</span>
              </div>
              <div className="h-[4px]" />
            </div>
            <Meter h={37} />
          </div>
          <TimeRuler />
          {/* song end marker */}
          <div className="absolute left-[2535px] top-[43px] w-[2px] h-[1519px] bg-[#8a8a8a]" />
        </div>
      </div>
    </div>
  );
}
